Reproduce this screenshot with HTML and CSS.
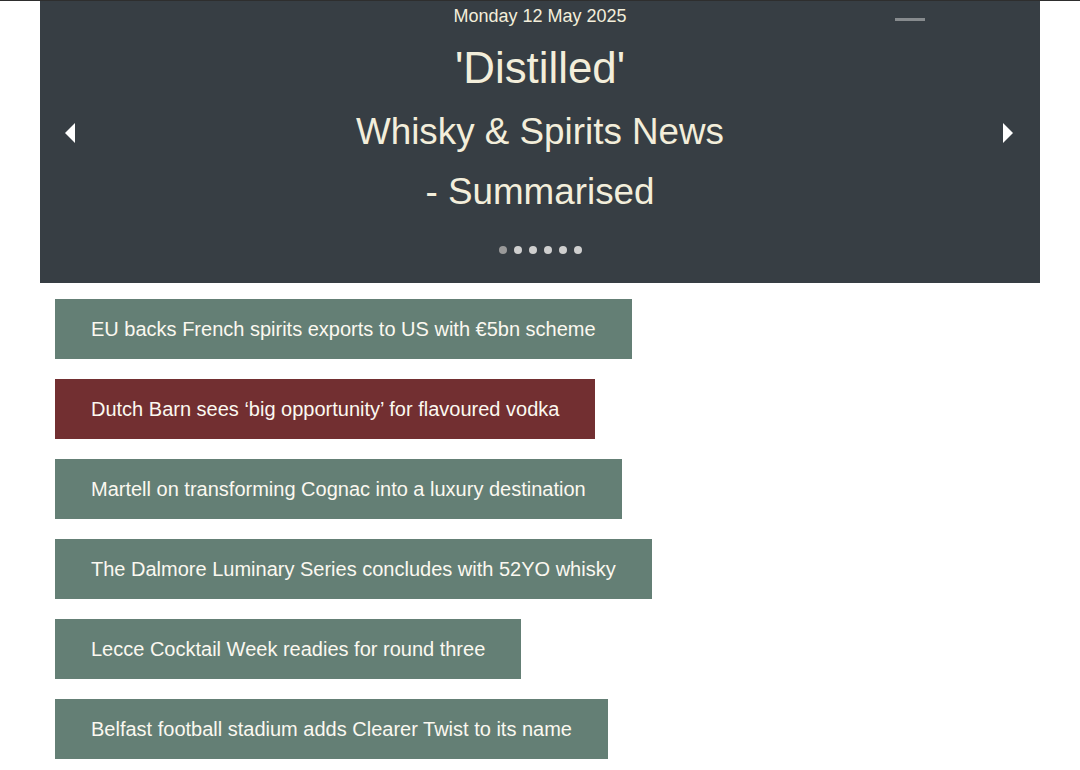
FILE: index.html
```html
<!DOCTYPE html>
<html lang="en">
<head>
    <meta charset="UTF-8">
    <meta name="viewport" content="width=device-width, initial-scale=1.0">
    <title>Distilled - Whisky &amp; Spirits News</title>
    <link rel="stylesheet" href="styles.css">
</head>
<body>
    <div class="pagina">
        <header class="cabecera">
            <span class="menu"></span>
            <button class="flecha izquierda" aria-label="Previous">
                <svg width="10" height="20" viewBox="0 0 10 20"><polygon points="10,0 10,20 0,10" fill="#fff"/></svg>
            </button>
            <button class="flecha derecha" aria-label="Next">
                <svg width="10" height="20" viewBox="0 0 10 20"><polygon points="0,0 0,20 10,10" fill="#fff"/></svg>
            </button>
            <div class="fecha">Monday 12 May 2025</div>
            <h1 class="titulo">'Distilled'</h1>
            <div class="subtitulo">Whisky &amp; Spirits News</div>
            <div class="subtitulo">- Summarised</div>
            <div class="puntos">
                <span class="punto activo"></span>
                <span class="punto"></span>
                <span class="punto"></span>
                <span class="punto"></span>
                <span class="punto"></span>
                <span class="punto"></span>
            </div>
        </header>

        <ul class="noticias">
            <li><a class="noticia" href="#">EU backs French spirits exports to US with €5bn scheme</a></li>
            <li><a class="noticia roja" href="#">Dutch Barn sees ‘big opportunity’ for flavoured vodka</a></li>
            <li><a class="noticia" href="#">Martell on transforming Cognac into a luxury destination</a></li>
            <li><a class="noticia" href="#">The Dalmore Luminary Series concludes with 52YO whisky</a></li>
            <li><a class="noticia" href="#">Lecce Cocktail Week readies for round three</a></li>
            <li><a class="noticia" href="#">Belfast football stadium adds Clearer Twist to its name</a></li>
        </ul>
    </div>
</body>
</html>
```

FILE: styles.css
```css
body {
    margin: 0;
    border-top: 1px solid #2e2e2e;
    background-color: #fff;
    font-family: "Liberation Sans", Arial, sans-serif;
}
.pagina {
    margin: 0 40px;
}
.cabecera {
    position: relative;
    background-color: #373e44;
    color: #f3eedb;
    text-align: center;
    padding-bottom: 29px;
}
.fecha {
    font-size: 18px;
    line-height: 30px;
}
.titulo {
    margin: 7px 0 0;
    font-size: 43.8px;
    font-weight: normal;
    line-height: 60px;
}
.subtitulo {
    font-size: 36.8px;
    line-height: 60px;
}
.titulo + .subtitulo {
    margin-top: 4px;
}
.puntos {
    display: flex;
    justify-content: center;
    gap: 7px;
    margin-top: 24px;
}
.punto {
    width: 8px;
    height: 8px;
    border-radius: 50%;
    background-color: #cfcfcf;
}
.punto.activo {
    background-color: #9a9a9a;
}
.menu {
    position: absolute;
    top: 17px;
    right: 115px;
    width: 30px;
    height: 3px;
    background-color: #878b8e;
}
.flecha {
    position: absolute;
    top: 122px;
    padding: 0;
    border: none;
    background: none;
    cursor: pointer;
    line-height: 0;
}
.flecha.izquierda {
    left: 25px;
}
.flecha.derecha {
    right: 27px;
}
.noticias {
    list-style: none;
    margin: 16px 0 0;
    padding: 0 0 0 15px;
    display: flex;
    flex-direction: column;
    align-items: flex-start;
    gap: 20px;
}
.noticia {
    display: block;
    height: 60px;
    line-height: 60px;
    padding: 0 36px;
    background-color: #647f75;
    color: #fbf8f0;
    font-size: 20px;
    text-decoration: none;
}
.noticia.roja {
    background-color: #722f31;
}
```
